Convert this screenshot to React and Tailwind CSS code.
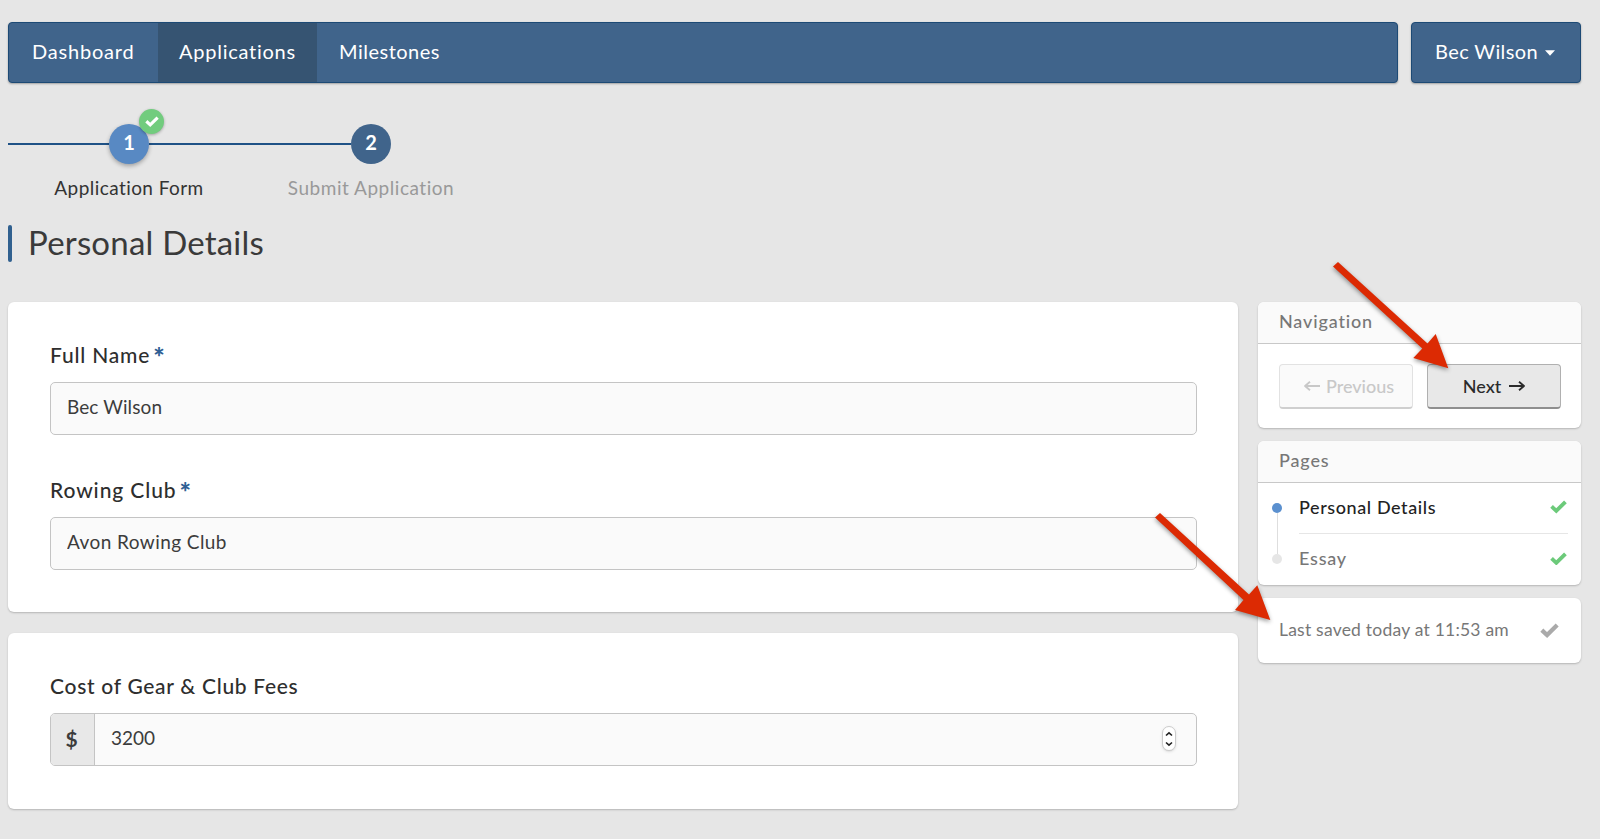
import { useState } from 'react';

const TABS = [
  { id: 'dashboard', label: 'Dashboard', cls: 'w-[149px] pl-[23px] tracking-[0.8px]' },
  { id: 'applications', label: 'Applications', cls: 'w-[159px] pl-[21px] tracking-[0.75px]' },
  { id: 'milestones', label: 'Milestones', cls: 'w-[145px] pl-[22px] tracking-[0.5px]' },
];

const STEPS = [
  { id: 1, label: 'Application Form', done: true },
  { id: 2, label: 'Submit Application', done: false },
];

const PAGES = [
  { id: 'personal', label: 'Personal Details' },
  { id: 'essay', label: 'Essay' },
];

function Check({ className }) {
  return (
    <svg viewBox="0 0 20 16" className={className} fill="none" stroke="currentColor" strokeWidth="4.6">
      <path d="M1.8 7.6 L7.4 12.8 L18.2 2.2" />
    </svg>
  );
}

function Arrow({ flip }) {
  return (
    <svg
      viewBox="0 0 16 12"
      className={`h-3 w-4 ${flip ? 'rotate-180' : ''}`}
      fill="none"
      stroke="currentColor"
      strokeWidth="1.8"
      strokeLinejoin="round"
    >
      <path d="M0 6 H15 M10 1.8 L15 6 L10 10.2" />
    </svg>
  );
}

function TopBar() {
  const [active, setActive] = useState('applications');
  return (
    <div className="flex gap-[13px] text-xl text-white">
      <nav className="flex h-[61px] w-[1390px] overflow-hidden rounded-[4px] border border-[#1d4a75] bg-[#40648b] shadow-[0_1px_2px_rgba(0,0,0,0.3)]">
        {TABS.map(tab => (
          <button
            key={tab.id}
            onClick={() => setActive(tab.id)}
            className={`${tab.cls} pb-[3px] text-left ${active === tab.id ? 'bg-[#365472]' : ''}`}
          >
            {tab.label}
          </button>
        ))}
      </nav>
      <button className="flex h-[61px] w-[170px] items-center rounded-[4px] border border-[#1d4a75] bg-[#40648b] pb-[3px] pl-[23px] tracking-[0.4px] shadow-[0_1px_2px_rgba(0,0,0,0.3)]">
        Bec Wilson
        <svg viewBox="0 0 10 6" className="ml-[7px] mt-1 h-1.5 w-2.5" fill="currentColor">
          <path d="M0 0.3 H10 L5 5.7 Z" />
        </svg>
      </button>
    </div>
  );
}

function Steps() {
  return (
    <div className="flex pt-[41px]">
      {STEPS.map(step => (
        <div key={step.id} className="flex w-[242px] flex-col items-center">
          <div className="flex w-full items-center">
            <div className="h-0.5 flex-1 bg-[#1f5286]" />
            <div
              className={`relative flex size-10 items-center justify-center rounded-full pb-1 text-xl font-bold text-white ${
                step.done ? 'bg-[#5889c3] shadow-[0_2px_4px_rgba(0,0,0,0.3)]' : 'bg-[#40648b]'
              }`}
            >
              {step.id}
              {step.done && (
                <span className="absolute -top-[15px] left-[30px] flex size-[25px] items-center justify-center rounded-full bg-[#72cc7e] shadow-[0_1px_3px_rgba(0,0,0,0.3)]">
                  <Check className="h-[11px] w-[14px]" />
                </span>
              )}
            </div>
            <div className={`h-0.5 flex-1 ${step.done ? 'bg-[#1f5286]' : ''}`} />
          </div>
          <div
            className={`mt-3 text-[19px] leading-6 ${
              step.done ? 'tracking-[0.43px] text-[#333]' : 'tracking-[0.53px] text-[#999]'
            }`}
          >
            {step.label}
          </div>
        </div>
      ))}
    </div>
  );
}

function Field({ label, required, labelClass, children }) {
  return (
    <div>
      <div className={`flex h-7 items-center gap-[3px] text-[21px] font-medium leading-7 text-[#2e2e2e] ${labelClass}`}>
        {label}
        {required && <span className="pt-1 text-[27px] font-black text-[#2f5f94]">*</span>}
      </div>
      <div className="mt-[13px] flex h-[53px] overflow-hidden rounded-[5px] border border-[#c4c4c4] bg-[#fafafa] text-[19px] text-[#3c3c3c]">
        {children}
      </div>
    </div>
  );
}

function Input({ value, className }) {
  const [text, setText] = useState(value);
  return (
    <input
      value={text}
      onChange={e => setText(e.target.value)}
      className={`min-w-0 flex-1 bg-transparent pb-[2px] pl-4 outline-none ${className}`}
    />
  );
}

function Stepper() {
  return (
    <div className="mb-0.5 mr-5 flex h-[25px] w-[14px] flex-col items-center justify-center self-center rounded-full border border-[#ccc] bg-white shadow-sm">
      <svg viewBox="0 0 8 16" className="h-4 w-2" fill="none" stroke="#222" strokeWidth="1.6">
        <path d="M1 4.5 L4 1.8 L7 4.5 M1 11.5 L4 14.2 L7 11.5" />
      </svg>
    </div>
  );
}

function Panel({ title, className, children }) {
  return (
    <section className={`overflow-hidden rounded-[6px] bg-white shadow-[0_1px_2px_rgba(0,0,0,0.22)] ${className}`}>
      {title && (
        <h2 className="h-[42px] border-b border-[#c8c8c8] bg-[#fafafa] pl-[21px] text-[18px] font-medium leading-[39px] tracking-[0.85px] text-[#777]">
          {title}
        </h2>
      )}
      {children}
    </section>
  );
}

function Sidebar() {
  return (
    <aside className="flex w-[323px] flex-col gap-[13px]">
      <Panel title="Navigation" className="h-[126px]">
        <div className="flex gap-3.5 pl-[21px] pt-[20px] text-[18px] font-medium">
          <button
            disabled
            className="flex h-[45px] w-[134px] items-center justify-center gap-1.5 rounded-[4px] border border-b-2 border-[#e2e2e2] border-b-[#cfcfcf] bg-[#fafafa] pl-1.5 text-[#c8c8c8]"
          >
            <Arrow flip />
            Previous
          </button>
          <button className="flex h-[45px] w-[134px] items-center justify-center gap-2 rounded-[4px] border border-b-2 border-[#b0b0b0] border-b-[#8f8f8f] bg-[#e8e8e8] text-[#2b2b2b]">
            Next
            <Arrow />
          </button>
        </div>
      </Panel>

      <Panel title="Pages" className="h-[144px]">
        <div className="flex pl-[14px] pr-[13px]">
          <div className="flex w-[10px] flex-col items-center pt-[20px]">
            <span className="size-[10px] rounded-full bg-[#5b90cf]" />
            <span className="h-[41px] w-px bg-[#dedede]" />
            <span className="size-[10px] rounded-full bg-[#e6e6e6]" />
          </div>
          <ul className="ml-[17px] flex-1 text-[18px] font-medium">
            {PAGES.map((page, i) => (
              <li
                key={page.id}
                className={`flex h-[51px] items-center justify-between pb-0.5 pr-px ${
                  i === 0 ? 'border-b border-[#e6e6e6] tracking-[0.6px] text-[#222]' : 'tracking-[0.8px] text-[#777]'
                }`}
              >
                {page.label}
                <Check className="h-[13.5px] w-[17px] text-[#6cca7a]" />
              </li>
            ))}
          </ul>
        </div>
      </Panel>

      <Panel className="h-[65px]">
        <div className="flex h-16 items-center justify-between pl-[21px] pr-[22px] text-[17.5px] tracking-[0.22px] text-[#777]">
          Last saved today at 11:53 am
          <Check className="h-[15px] w-[19px] text-[#aaa]" />
        </div>
      </Panel>
    </aside>
  );
}

// Red pointers drawn over the form
function Pointers() {
  return (
    <svg
      viewBox="0 0 1600 839"
      className="pointer-events-none absolute inset-0 h-[839px] w-[1600px] drop-shadow-[0_2px_2px_rgba(0,0,0,0.4)]"
      fill="#dc2a03"
    >
      <path d="M1338 262 L1427.5 343.5 L1435.7 334 L1448.3 368.3 L1413.3 358 L1422.3 348.5 L1333 266.5 Z" />
      <path d="M1160 513 L1249 594.5 L1257.3 585.3 L1270.3 620 L1235 610 L1243.5 600 L1155 517.5 Z" />
    </svg>
  );
}

export default function App() {
  return (
    <div className="relative h-[839px] w-[1600px] overflow-hidden bg-[#e6e6e6] pl-2 pt-[22px] font-['Lato',sans-serif]">
      <TopBar />
      <Steps />
      <div className="mt-[25px] flex h-[37px] items-center">
        <div className="h-[37px] w-1 rounded-[2px] bg-[#30608f]" />
        <h1 className="ml-4 h-[39px] text-[33px] leading-[37px] tracking-[0.2px] text-[#3a3a3a]">Personal Details</h1>
      </div>

      <div className="mt-10 flex gap-5">
        <main className="flex w-[1230px] flex-col gap-[21px]">
          <Panel className="flex h-[310px] flex-col gap-[41px] pl-[42px] pr-[41px] pt-[39px]">
            <Field label="Full Name" required labelClass="tracking-[0.8px]">
              <Input value="Bec Wilson" className="tracking-[0.1px]" />
            </Field>
            <Field label="Rowing Club" required labelClass="tracking-[0.9px]">
              <Input value="Avon Rowing Club" className="tracking-[0.43px]" />
            </Field>
          </Panel>
          <Panel className="h-[176px] pl-[42px] pr-[41px] pt-[39px]">
            <Field label="Cost of Gear & Club Fees" labelClass="tracking-[0.7px]">
              <div className="flex w-[44px] items-center justify-center border-r border-[#c4c4c4] bg-[#e8e8e8] pb-0.5 pr-0.5 text-[21px] font-bold">
                $
              </div>
              <Input value="3200" className="" />
              <Stepper />
            </Field>
          </Panel>
        </main>
        <Sidebar />
      </div>
      <Pointers />
    </div>
  );
}
